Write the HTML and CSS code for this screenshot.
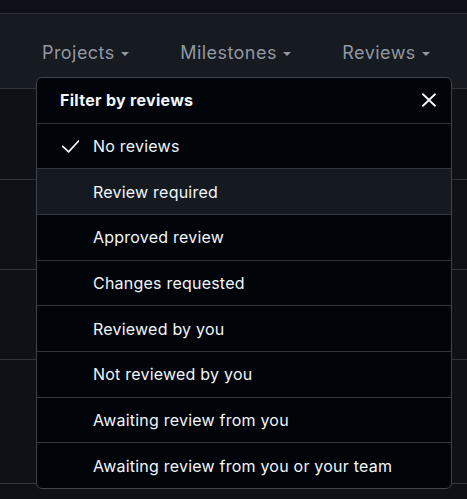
FILE: index.html
```html
<!DOCTYPE html>
<html lang="en">
<head>
<meta charset="utf-8">
<title>Filter by reviews</title>
<link rel="stylesheet" href="styles.css">
</head>
<body>
<div class="top-strip"></div>
<header class="filter-bar">
  <button class="nav-item">Projects <span class="caret"></span></button>
  <button class="nav-item">Milestones <span class="caret"></span></button>
  <button class="nav-item">Reviews <span class="caret"></span></button>
</header>
<div class="list">
  <div class="list-row row-a"></div>
  <div class="list-row row-b"></div>
  <div class="list-row row-b"></div>
  <div class="list-row row-c"></div>
</div>

<div class="menu">
  <div class="menu-header">
    <span class="menu-title">Filter by reviews</span>
    <svg class="close" width="14" height="14" viewBox="0 0 14 14" aria-hidden="true">
      <path d="M1 1.3 L13 12.7 M13 1.3 L1 12.7" stroke="#f0f6fc" stroke-width="1.9" stroke-linecap="round" fill="none"/>
    </svg>
  </div>
  <div class="menu-item">
    <span class="check">
      <svg width="18" height="14" viewBox="0 0 18 14" aria-hidden="true">
        <path d="M1.8 7.4 L7.6 12.8 L18 1.6" stroke="#f0f6fc" stroke-width="1.7" stroke-linecap="round" stroke-linejoin="round" fill="none"/>
      </svg>
    </span>
    <span>No reviews</span>
  </div>
  <div class="menu-item hover"><span class="check"></span><span>Review required</span></div>
  <div class="menu-item"><span class="check"></span><span>Approved review</span></div>
  <div class="menu-item"><span class="check"></span><span>Changes requested</span></div>
  <div class="menu-item"><span class="check"></span><span>Reviewed by you</span></div>
  <div class="menu-item"><span class="check"></span><span>Not reviewed by you</span></div>
  <div class="menu-item"><span class="check"></span><span>Awaiting review from you</span></div>
  <div class="menu-item"><span class="check"></span><span>Awaiting review from you or your team</span></div>
</div>
</body>
</html>
```

FILE: styles.css
```css
* { box-sizing: border-box; }

html, body {
  margin: 0;
  padding: 0;
}

body {
  background: #0e1115;
  font-family: Inter, "Noto Sans", "Liberation Sans", sans-serif;
  color: #f0f6fc;
  width: 467px;
  height: 499px;
  overflow: hidden;
  position: relative;
}

.top-strip {
  height: 14px;
  background: #0d1117;
  border-bottom: 1px solid #2b3036;
}

.filter-bar {
  height: 75px;
  background: #161a21;
  border-bottom: 1px solid #30363d;
  display: flex;
  align-items: center;
  gap: 51.5px;
  padding: 3px 0 0 42px;
}

.nav-item {
  background: none;
  border: 0;
  padding: 0;
  margin: 0;
  color: #9198a1;
  font-family: inherit;
  font-size: 18px;
  letter-spacing: 0.45px;
  display: flex;
  align-items: center;
  gap: 6px;
  line-height: 24px;
}

.caret {
  width: 0;
  height: 0;
  border-left: 4.5px solid transparent;
  border-right: 4.5px solid transparent;
  border-top: 4.5px solid #9198a1;
  margin-top: 2px;
}

.list-row {
  border-bottom: 1px solid #30363d;
  background: #0e1115;
}
.row-a { height: 91px; }
.row-b { height: 90px; }
.row-c { height: 124px; }

.menu {
  position: absolute;
  left: 36px;
  top: 77px;
  width: 416px;
  background: #010409;
  border: 1px solid #3d444d;
  border-radius: 6px;
  overflow: hidden;
}

.menu-header {
  height: 44.67px;
  display: flex;
  align-items: center;
  justify-content: space-between;
  padding: 0 15px 0 23px;
}

.menu-title {
  font-size: 16px;
  font-weight: 700;
  letter-spacing: 0.3px;
  color: #f0f6fc;
}

.close { display: block; }

.menu-item {
  height: 45.67px;
  border-top: 1px solid #30363d;
  display: flex;
  align-items: center;
  padding-left: 23px;
  font-size: 16px;
  letter-spacing: 0.22px;
  color: #f0f6fc;
}

.menu-item.hover { background: #151a20; }

.check {
  width: 33px;
  flex: none;
  display: flex;
  align-items: center;
}
.check svg { display: block; margin-left: 1px; }
```
